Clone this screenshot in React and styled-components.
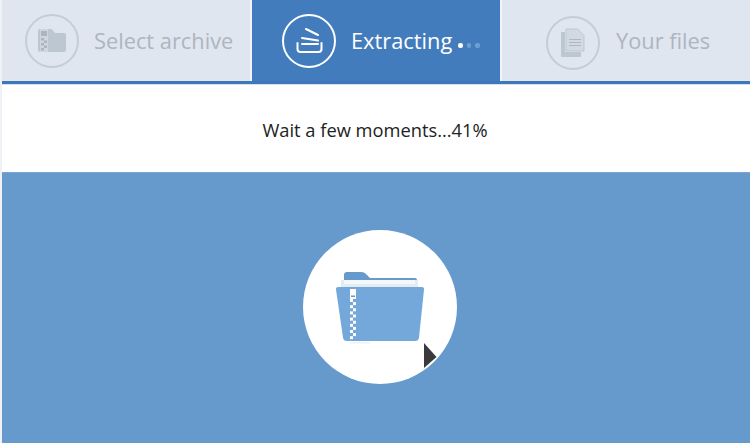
import React from "react";
import styled, { createGlobalStyle } from "styled-components";

const Global = createGlobalStyle`
  html, body { margin: 0; padding: 0; background: #fff; }
  body { width: 750px; height: 443px; overflow: hidden; font-family: "Open Sans", "Liberation Sans", sans-serif; }
`;
const Page = styled.div`
  width: 750px; height: 443px; display: flex; flex-direction: column;
  padding-left: 2px; box-sizing: border-box; background: #eef2f7;
`;
const Tabs = styled.div`
  height: 84px; flex: none; box-sizing: border-box; display: flex; gap: 2px; background: #f1f4f8;
  border-bottom: 3px solid #3f78ba;
`;
const Tab = styled.div`
  width: 248px; height: 81px; flex: none; display: flex; align-items: center;
  box-sizing: border-box; padding-left: ${p => p.$pad}px; gap: ${p => p.$gap}px;
  background: ${p => (p.$active ? "#427cbd" : "#e0e6ef")};
  color: ${p => (p.$active ? "#fff" : "#adb5c1")};
  font-size: 21.8px; line-height: 30px;
`;
const Label = styled.span`
  margin-top: 0;
`;
const Ring = styled.div`
  width: 54px; height: 54px; flex: none; box-sizing: border-box; border-radius: 50%;
  display: flex; align-items: center; justify-content: center;
  border: 2px solid ${p => (p.$active ? "#fff" : "#c5ccd6")};
  transform: translateY(${p => p.$dy || 0}px);
`;
const Dots = styled.span`
  display: inline-flex; gap: 4px; margin-left: 6px; vertical-align: 1px;
`;
const Dot = styled.i`
  width: 4.500px; height: 4.500px; border-radius: 50%; display: block;
  background: ${p => (p.$on ? "#fff" : "#6f9fd2")};
`;
const Status = styled.div`
  height: 88px; flex: none; background: #fff; display: flex; align-items: center; justify-content: center;
  color: #222; font-size: 18.3px; padding-top: 2px; box-sizing: border-box; padding-right: 2px;
  border-top: 1px solid #d5e2f0;
`;
const Stage = styled.div`
  flex: 1; background: #6699cc; display: flex; justify-content: center; padding-top: 57px;
  border-top: 1px solid #7ba7d4; box-sizing: border-box; padding-left: 8px;
`;
const Disc = styled.div`
  width: 154px; height: 154px; border-radius: 50%; background: #fff; position: relative;
  display: flex; align-items: center; justify-content: center;
`;
const Pointer = styled.svg`
  position: absolute; left: 120px; top: 113px;
`;

const ArchiveIcon = () => (
  <svg width="28" height="23" viewBox="0 0 28 23">
    <path d="M2 0h10.500c1 0 1.500.4 2 1l2.500 3h9a2 2 0 0 1 2 2v15a2 2 0 0 1-2 2H2a2 2 0 0 1-2-2V2a2 2 0 0 1 2-2z" fill="#bdc7d2" />
    <rect x="2" y="0" width="8" height="23" fill="#cfd6df" />
    <rect x="3" y="2" width="6" height="5" fill="#aab5c1" />
    <path d="M3 9h3v2.500H3zM6 11.500h3V14H6zM3 14h3v2.500H3zM6 16.500h3V19H6zM3 19h3v2.500H3z" fill="#aab5c1" />
  </svg>
);
const ExtractIcon = () => (
  <svg width="27" height="25" viewBox="0 0 27 25" fill="none" stroke="#fff" strokeWidth="2" strokeLinecap="round" strokeLinejoin="round">
    <path d="M10 1l12 6" />
    <path d="M6 10l16 2.500" />
    <path d="M6 16h16" />
    <path d="M1.500 15v6a3 3 0 0 0 3 3h18a3 3 0 0 0 3-3v-6" />
  </svg>
);
const FilesIcon = () => (
  <svg width="24" height="29" viewBox="0 0 24 29">
    <rect x="0" y="4" width="20" height="25" rx="1" fill="#bdc7d2" />
    <path d="M4 0h13l7 7v17H4z" fill="#e0e6ef" />
    <path d="M5 1h11.500L23 7.500V23H5z" fill="#d2d9e2" stroke="#bdc7d2" strokeWidth="1" />
    <path d="M8 11.500h12M8 14.500h12M8 17.500h12" stroke="#aeb8c4" strokeWidth="1.200" />
  </svg>
);
const zipTeeth = Array.from({ length: 13 }, (_, i) => i);
const BigFolder = () => (
  <svg width="90" height="74" viewBox="0 0 90 74">
    <path d="M9 11V5a3 3 0 0 1 3-3h14c3 0 4 1 6 3l3 3h45a2 2 0 0 1 2 2v4z" fill="#6699cc" />
    <rect x="6" y="10" width="77" height="8" fill="#e3edf1" />
    <rect x="9" y="10" width="71" height="4" fill="#f4f8fa" />
    <path d="M3 17h84a2 2 0 0 1 2 2.500l-5 48a4 4 0 0 1-4 3.500H12a4 4 0 0 1-4-3.500L1 19.500A2 2 0 0 1 3 17z" fill="#74a7da" />
    <rect x="15" y="72" width="20" height="1.500" fill="#eef1f4" />
    <rect x="15" y="19" width="6" height="10" fill="#fff" />
    <rect x="16" y="25.500" width="4" height="1.500" fill="#6699cc" />
    {zipTeeth.map(i => (
      <rect key={i} x={i % 2 ? 18 : 15} y={29 + i * 3.1} width="3" height="3" fill="#fff" />
    ))}
  </svg>
);

export default function App() {
  return (
    <>
      <Global />
      <Page>
        <Tabs>
          <Tab $pad={23} $gap={15}>
            <Ring><ArchiveIcon /></Ring>
            <Label>Select archive</Label>
          </Tab>
          <Tab $pad={30} $gap={15} $active>
            <Ring $active><ExtractIcon /></Ring>
            <Label>Extracting<Dots><Dot $on /><Dot /><Dot /></Dots></Label>
          </Tab>
          <Tab $pad={44} $gap={16}>
            <Ring $dy={2}><FilesIcon /></Ring>
            <Label>Your files</Label>
          </Tab>
        </Tabs>
        <Status>Wait a few moments...41%</Status>
        <Stage>
          <Disc>
            <BigFolder />
            <Pointer width="14" height="26" viewBox="0 0 14 26">
              <path d="M1 0l12.500 14L1 25z" fill="#3a3a3a" />
            </Pointer>
          </Disc>
        </Stage>
      </Page>
    </>
  );
}
